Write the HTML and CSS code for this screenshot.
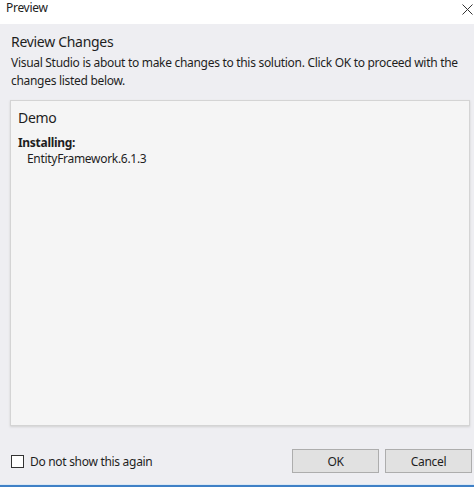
FILE: index.html
```html
<!DOCTYPE html>
<html lang="en">
  <head>
    <meta charset="UTF-8" />
    <title>Preview</title>
    <link rel="stylesheet" href="styles.css">
  </head>
  <body>
    <div class="dialog">
      <div class="titlebar">
        <span class="title">Preview</span>
        <span class="close">
          <svg width="11" height="11" viewBox="0 0 11 11">
            <path d="M0.5 0.5 L10.5 10.5 M10.5 0.5 L0.5 10.5" stroke="#333" stroke-width="1" fill="none" />
          </svg>
        </span>
      </div>
      <div class="content">
        <h1 class="heading">Review Changes</h1>
        <p class="desc">Visual Studio is about to make changes to this solution. Click OK to proceed with the changes listed below.</p>
        <div class="panel">
          <h2 class="project">Demo</h2>
          <div class="group">Installing:</div>
          <div class="item">EntityFramework.6.1.3</div>
        </div>
        <div class="footer">
          <label class="check"><span class="box"></span>Do not show this again</label>
          <div class="buttons">
            <button class="btn">OK</button>
            <button class="btn">Cancel</button>
          </div>
        </div>
      </div>
    </div>
  </body>
</html>
```
FILE: styles.css
```css
* {
  margin: 0;
  padding: 0;
  box-sizing: border-box;
}
body {
  width: 474px;
  height: 487px;
  font-family: "Noto Sans", "Open Sans", sans-serif;
  font-size: 12px;
  letter-spacing: -0.3px;
  color: #1e1e1e;
  background-color: #eeeef2;
  overflow: hidden;
}
.dialog {
  height: 487px;
  display: flex;
  flex-direction: column;
  border-bottom: 2px solid #3f80c6;
}
.titlebar {
  height: 24px;
  background-color: #fff;
  display: flex;
  align-items: flex-start;
  justify-content: space-between;
  padding: 0 1px 0 6px;
}
.title {
  font-size: 12px;
  line-height: 16px;
  color: #222;
}
.close {
  display: flex;
  margin-top: 4px;
}
.content {
  flex: 1;
  display: flex;
  flex-direction: column;
  padding: 8px 2px 0 10px;
  border-bottom: 1px solid #dbe8f5;
}
.heading {
  font-weight: normal;
  font-size: 14px;
  color: #1e1e1e;
  padding-left: 1px;
  line-height: 20px;
}
.desc {
  font-size: 12px;
  line-height: 18px;
  margin-top: 2px;
  padding-left: 1px;
  padding-right: 10px;
}
.panel {
  margin-top: 10px;
  height: 326px;
  margin-right: 2px;
  background-color: #f5f5f5;
  border: 1px solid #d4d4d4;
  box-shadow: 0 1px 2px #d0d0d0;
  padding: 7px 7px;
}
.project {
  font-weight: normal;
  font-size: 14px;
  line-height: 20px;
  margin-bottom: 7px;
}
.group {
  font-weight: bold;
  line-height: 16px;
}
.item {
  padding-left: 9px;
  line-height: 16px;
}
.footer {
  display: flex;
  justify-content: space-between;
  align-items: center;
  margin-top: 23px;
}
.check {
  display: flex;
  align-items: center;
  gap: 6px;
  padding-left: 1px;
}
.box {
  width: 13px;
  height: 13px;
  border: 1px solid #333;
  background-color: #fff;
}
.buttons {
  display: flex;
  gap: 6px;
}
.btn {
  width: 87px;
  height: 24px;
  background-color: #e1e1e1;
  border: 1px solid #adadad;
  font-family: inherit;
  font-size: 12px;
  letter-spacing: inherit;
  color: #1e1e1e;
}
```
